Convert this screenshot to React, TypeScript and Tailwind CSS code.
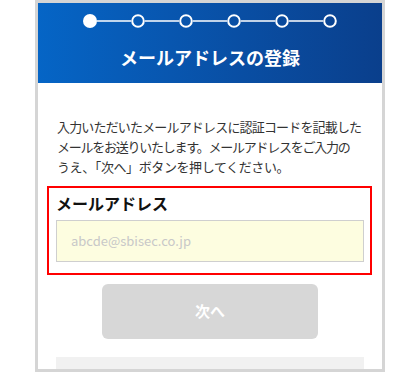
const font = {
  fontFamily: '"Noto Sans CJK JP", "Noto Sans", sans-serif',
};

const Stepper = () => {
  const steps = [0, 1, 2, 3, 4, 5];
  return (
    <svg width="256" height="18" viewBox="0 0 256 18" className="block mx-auto">
      {steps.slice(0, 5).map((i) => (
        <line key={"l" + i} x1={8 + i * 48 + 7} y1="9" x2={8 + (i + 1) * 48 - 7} y2="9" stroke="white" strokeWidth="1.5" />
      ))}
      {steps.map((i) =>
        i === 0 ? (
          <circle key={i} cx={8 + i * 48} cy="9" r="7" fill="white" />
        ) : (
          <circle key={i} cx={8 + i * 48} cy="9" r="5.8" fill="none" stroke="white" strokeWidth="2" />
        )
      )}
    </svg>
  );
};

export default function App() {
  return (
    <div className="w-[420px] h-[373px] bg-white overflow-hidden" style={font}>
      <div className="ml-[35px] w-[350px] h-[372px] border-[3px] border-[#d5d5d5] bg-white overflow-hidden">
        {/* header */}
        <div className="h-[80px] bg-gradient-to-r from-[#0565c6] to-[#0a3f8c] pt-[9px]">
          <Stepper />
          <h1 className="mt-[15px] text-center text-white font-bold text-[18px] leading-[24px]">
            メールアドレスの登録
          </h1>
        </div>

        {/* body */}
        <div className="pt-[34px]">
          <p className="px-[19px] text-[13px] leading-[20px] text-[#333] whitespace-nowrap">
            <span className="block tracking-[-0.83px]">入力いただいたメールアドレスに認証コードを記載した</span>
            <span className="block tracking-[-1.25px]">メールをお送りいたします。メールアドレスをご入力の</span>
            <span className="block tracking-[-0.4px]">うえ、「次へ」ボタンを押してください。</span>
          </p>

          <div className="mt-[9px] ml-[9px] mr-[10px] border-2 border-[#ff0000] px-[7px] pr-[6px] pb-[11px]">
            <div className="pt-[3px] text-[16px] leading-[24px] font-bold text-[#111]">メールアドレス</div>
            <div className="mt-[5px] h-[42px] bg-[#fdfde0] border border-[#cfcfcf] flex items-center pl-[14px] text-[13px] text-[#c8c8c8]">
              abcde@sbisec.co.jp
            </div>
          </div>

          <div className="mt-[9px] mx-auto w-[216px] h-[55px] rounded-[6px] bg-[#d7d7d7] flex items-center justify-center text-white font-bold text-[15px]">
            次へ
          </div>

          <div className="mt-[18px] ml-[18px] mr-[18px] h-[40px] bg-[#f1f1f1] pt-[12px] pl-[24px] text-[11px] leading-[14px] text-[#aaa]">
            ご注意事項
          </div>
        </div>
      </div>
    </div>
  );
}
